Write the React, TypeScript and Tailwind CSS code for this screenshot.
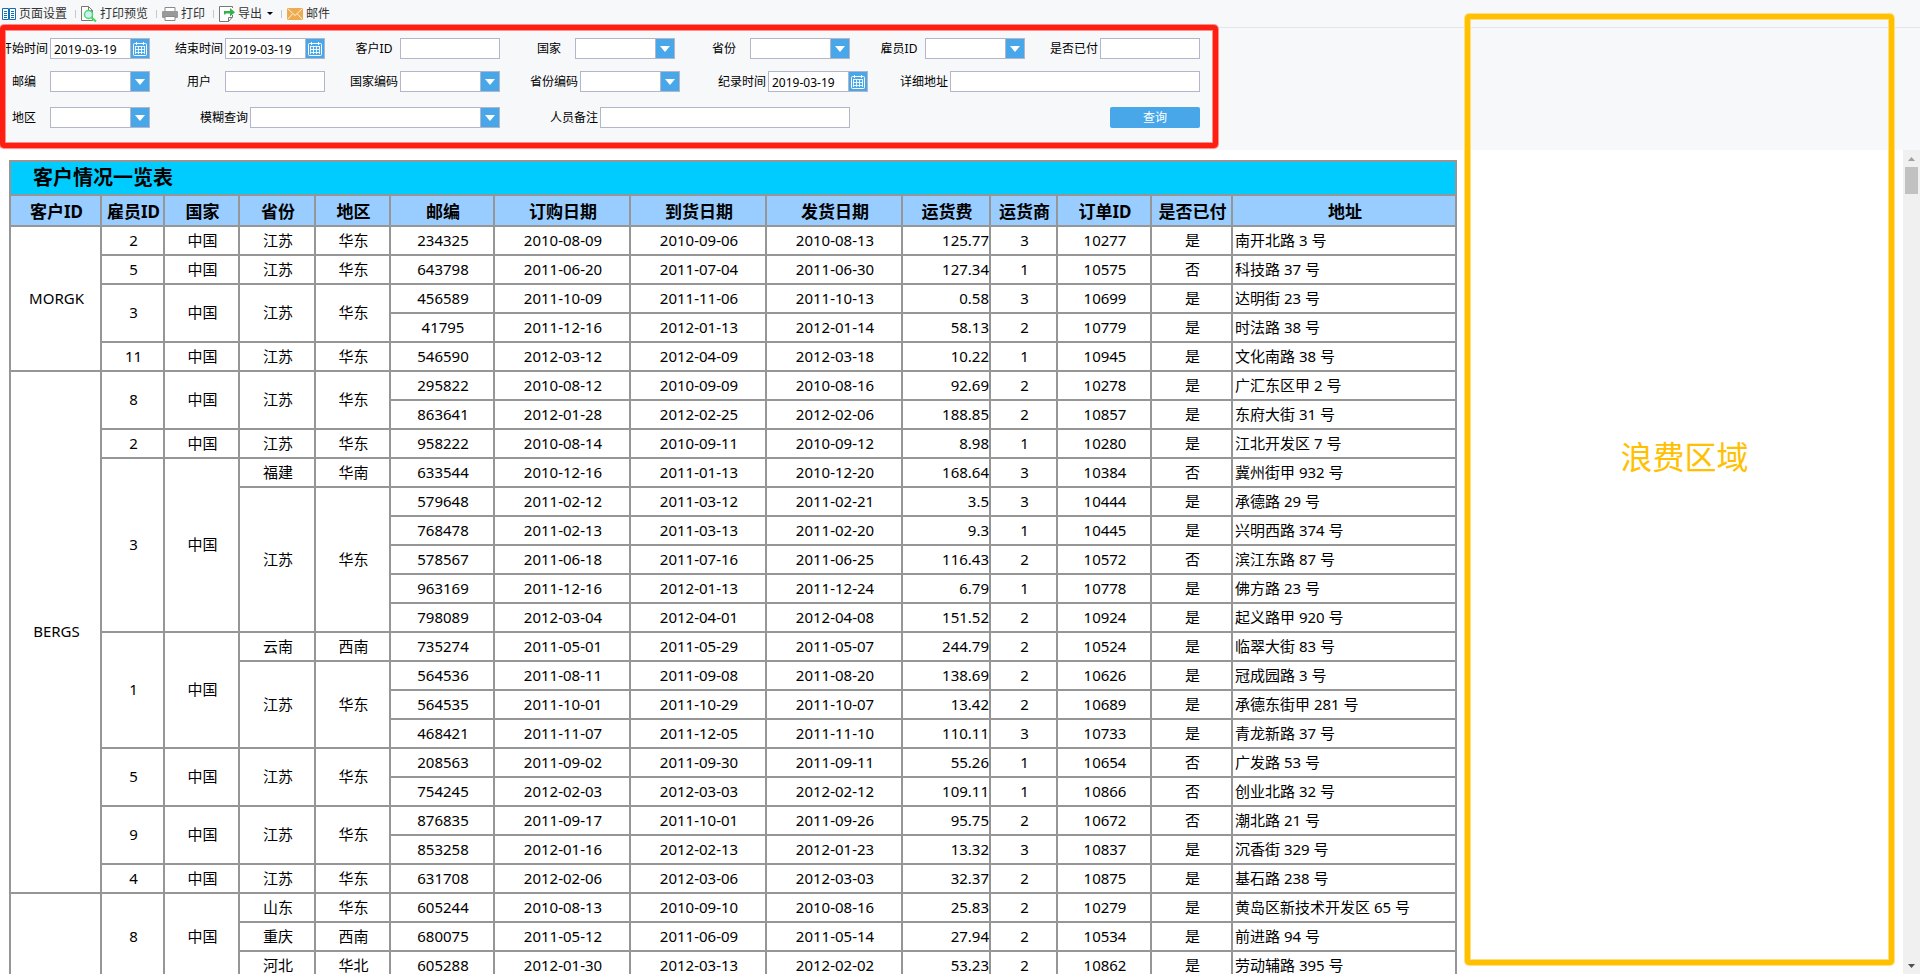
import { useId } from 'react';

type Row = {
    customer?: [string, number];
    employee?: [string, number];
    province?: [string, number];
    region?: [string, number];
    zip: string;
    dates: [string, string, string];
    fee: string;
    shipper: string;
    order: string;
    paid: string;
    address: string;
};

const columns = [
    { title: '客户ID', width: 'w-[91px]' },
    { title: '雇员ID', width: 'w-[63px]' },
    { title: '国家', width: 'w-[75px]' },
    { title: '省份', width: 'w-[76px]' },
    { title: '地区', width: 'w-[75px]' },
    { title: '邮编', width: 'w-[104px]' },
    { title: '订购日期', width: 'w-[136px]' },
    { title: '到货日期', width: 'w-[136px]' },
    { title: '发货日期', width: 'w-[136px]' },
    { title: '运货费', width: 'w-[88px]' },
    { title: '运货商', width: 'w-[67px]' },
    { title: '订单ID', width: 'w-[94px]' },
    { title: '是否已付', width: 'w-[81px]' },
    { title: '地址', width: 'w-[224px]' },
];

// [value, rowSpan] is only given on the first row of a merged cell
const rows: Row[] = [
    { customer: ['MORGK', 5], employee: ['2', 1], province: ['江苏', 1], region: ['华东', 1], zip: '234325', dates: ['2010-08-09', '2010-09-06', '2010-08-13'], fee: '125.77', shipper: '3', order: '10277', paid: '是', address: '南开北路 3 号' },
    { employee: ['5', 1], province: ['江苏', 1], region: ['华东', 1], zip: '643798', dates: ['2011-06-20', '2011-07-04', '2011-06-30'], fee: '127.34', shipper: '1', order: '10575', paid: '否', address: '科技路 37 号' },
    { employee: ['3', 2], province: ['江苏', 2], region: ['华东', 2], zip: '456589', dates: ['2011-10-09', '2011-11-06', '2011-10-13'], fee: '0.58', shipper: '3', order: '10699', paid: '是', address: '达明街 23 号' },
    { zip: '41795', dates: ['2011-12-16', '2012-01-13', '2012-01-14'], fee: '58.13', shipper: '2', order: '10779', paid: '是', address: '时法路 38 号' },
    { employee: ['11', 1], province: ['江苏', 1], region: ['华东', 1], zip: '546590', dates: ['2012-03-12', '2012-04-09', '2012-03-18'], fee: '10.22', shipper: '1', order: '10945', paid: '是', address: '文化南路 38 号' },
    { customer: ['BERGS', 18], employee: ['8', 2], province: ['江苏', 2], region: ['华东', 2], zip: '295822', dates: ['2010-08-12', '2010-09-09', '2010-08-16'], fee: '92.69', shipper: '2', order: '10278', paid: '是', address: '广汇东区甲 2 号' },
    { zip: '863641', dates: ['2012-01-28', '2012-02-25', '2012-02-06'], fee: '188.85', shipper: '2', order: '10857', paid: '是', address: '东府大街 31 号' },
    { employee: ['2', 1], province: ['江苏', 1], region: ['华东', 1], zip: '958222', dates: ['2010-08-14', '2010-09-11', '2010-09-12'], fee: '8.98', shipper: '1', order: '10280', paid: '是', address: '江北开发区 7 号' },
    { employee: ['3', 6], province: ['福建', 1], region: ['华南', 1], zip: '633544', dates: ['2010-12-16', '2011-01-13', '2010-12-20'], fee: '168.64', shipper: '3', order: '10384', paid: '否', address: '冀州街甲 932 号' },
    { province: ['江苏', 5], region: ['华东', 5], zip: '579648', dates: ['2011-02-12', '2011-03-12', '2011-02-21'], fee: '3.5', shipper: '3', order: '10444', paid: '是', address: '承德路 29 号' },
    { zip: '768478', dates: ['2011-02-13', '2011-03-13', '2011-02-20'], fee: '9.3', shipper: '1', order: '10445', paid: '是', address: '兴明西路 374 号' },
    { zip: '578567', dates: ['2011-06-18', '2011-07-16', '2011-06-25'], fee: '116.43', shipper: '2', order: '10572', paid: '否', address: '滨江东路 87 号' },
    { zip: '963169', dates: ['2011-12-16', '2012-01-13', '2011-12-24'], fee: '6.79', shipper: '1', order: '10778', paid: '是', address: '佛方路 23 号' },
    { zip: '798089', dates: ['2012-03-04', '2012-04-01', '2012-04-08'], fee: '151.52', shipper: '2', order: '10924', paid: '是', address: '起义路甲 920 号' },
    { employee: ['1', 4], province: ['云南', 1], region: ['西南', 1], zip: '735274', dates: ['2011-05-01', '2011-05-29', '2011-05-07'], fee: '244.79', shipper: '2', order: '10524', paid: '是', address: '临翠大街 83 号' },
    { province: ['江苏', 3], region: ['华东', 3], zip: '564536', dates: ['2011-08-11', '2011-09-08', '2011-08-20'], fee: '138.69', shipper: '2', order: '10626', paid: '是', address: '冠成园路 3 号' },
    { zip: '564535', dates: ['2011-10-01', '2011-10-29', '2011-10-07'], fee: '13.42', shipper: '2', order: '10689', paid: '是', address: '承德东街甲 281 号' },
    { zip: '468421', dates: ['2011-11-07', '2011-12-05', '2011-11-10'], fee: '110.11', shipper: '3', order: '10733', paid: '是', address: '青龙新路 37 号' },
    { employee: ['5', 2], province: ['江苏', 2], region: ['华东', 2], zip: '208563', dates: ['2011-09-02', '2011-09-30', '2011-09-11'], fee: '55.26', shipper: '1', order: '10654', paid: '否', address: '广发路 53 号' },
    { zip: '754245', dates: ['2012-02-03', '2012-03-03', '2012-02-12'], fee: '109.11', shipper: '1', order: '10866', paid: '否', address: '创业北路 32 号' },
    { employee: ['9', 2], province: ['江苏', 2], region: ['华东', 2], zip: '876835', dates: ['2011-09-17', '2011-10-01', '2011-09-26'], fee: '95.75', shipper: '2', order: '10672', paid: '否', address: '潮北路 21 号' },
    { zip: '853258', dates: ['2012-01-16', '2012-02-13', '2012-01-23'], fee: '13.32', shipper: '3', order: '10837', paid: '是', address: '沉香街 329 号' },
    { employee: ['4', 1], province: ['江苏', 1], region: ['华东', 1], zip: '631708', dates: ['2012-02-06', '2012-03-06', '2012-03-03'], fee: '32.37', shipper: '2', order: '10875', paid: '是', address: '基石路 238 号' },
    { customer: ['', 3], employee: ['8', 3], province: ['山东', 1], region: ['华东', 1], zip: '605244', dates: ['2010-08-13', '2010-09-10', '2010-08-16'], fee: '25.83', shipper: '2', order: '10279', paid: '是', address: '黄岛区新技术开发区 65 号' },
    { province: ['重庆', 1], region: ['西南', 1], zip: '680075', dates: ['2011-05-12', '2011-06-09', '2011-05-14'], fee: '27.94', shipper: '2', order: '10534', paid: '是', address: '前进路 94 号' },
    { province: ['河北', 1], region: ['华北', 1], zip: '605288', dates: ['2012-01-30', '2012-03-13', '2012-02-02'], fee: '53.23', shipper: '2', order: '10862', paid: '是', address: '劳动辅路 395 号' },
];

function PageSetupIcon() {
    return (
        <svg width="14" height="12" viewBox="0 0 14 12" fill="none" stroke="#0f6cb6">
            <path d="M.5 .5h6v11h-6zM7.5 .5h6v11h-6z" fill="#fff" />
            <path d="M2 3.5h3M2 5.5h3M2 7.5h3M2 9.5h3M9 3.5h3M9 5.5h3M9 7.5h3M9 9.5h3" />
        </svg>
    );
}

function PreviewIcon() {
    return (
        <svg width="16" height="16" viewBox="0 0 16 16" fill="none">
            <path d="M.5 .5h7l4 4v10H.5z" fill="#fff" stroke="#777" />
            <path d="M7.5 .5v4h4" stroke="#777" />
            <circle cx="7.5" cy="8.5" r="4" fill="#cdeff5" stroke="#4bdc6a" strokeWidth="1.5" />
            <path d="M10.5 11.5l4.500 4" stroke="#35e052" strokeWidth="2" />
        </svg>
    );
}

function PrintIcon() {
    return (
        <svg width="16" height="14" viewBox="0 0 16 14" fill="none">
            <path d="M3 5V.5h10V5" fill="#fff" stroke="#8a8a8a" />
            <rect y="4" width="16" height="7" rx="1" fill="#999" />
            <path d="M3 9.5h10v4H3z" fill="#fff" stroke="#8a8a8a" />
        </svg>
    );
}

function ExportIcon() {
    return (
        <svg width="16" height="16" viewBox="0 0 16 16" fill="none">
            <path d="M13.5 9v2l-4 4.5H.5V.5h13V2" fill="#fff" stroke="#777" />
            <path d="M9.5 15.5v-4h4" stroke="#777" />
            <path d="M5 8.500V5h6V2l5 4.200-5 4.200V7.500H6.500v1z" fill="#35b04a" />
        </svg>
    );
}

function MailIcon() {
    return (
        <svg width="16" height="12" viewBox="0 0 16 12">
            <rect width="16" height="12" fill="#eeac50" />
            <path d="M.5 .5L8 7.5 15.5 .5M.5 11.5L5.5 6M15.5 11.5L10.5 6" fill="none" stroke="#fff1d8" />
        </svg>
    );
}

function CalendarIcon() {
    return (
        <svg width="14" height="14" viewBox="0 0 14 14" fill="none" stroke="#fff">
            <rect x=".5" y="1.5" width="13" height="12" rx="1" />
            <path d="M3.500 0v3M10.500 0v3" />
            <path d="M2 4.500h10M2 7.500h10M2 10.500h10M2.500 4v8M5.500 4v8M8.500 4v8M11.500 4v8" strokeOpacity=".85" />
        </svg>
    );
}

function Separator() {
    return <span className="ml-[3px] h-2 w-px bg-[#c4c6ca]" />;
}

function ToolButton({ icon, label, caret }: { icon: React.ReactNode; label: string; caret?: boolean }) {
    return (
        <button type="button" className="flex items-center gap-[3px] text-[#333]">
            {icon}
            {label}
            {caret && (
                <svg width="6" height="3" viewBox="0 0 6 3" className="ml-0.5">
                    <path d="M0 0h6L3 3z" fill="#000" />
                </svg>
            )}
        </button>
    );
}

function Field({ label, type = 'text', wide, className = '' }: { label: string; type?: 'text' | 'date' | 'select'; wide?: boolean; className?: string }) {
    const id = useId();
    const box = 'h-[21px] border border-[#b3b5cb] bg-white';
    const width = wide ? 'w-[250px]' : 'w-[100px]';

    return (
        <div className={`flex items-center ${className}`}>
            <label htmlFor={id} className="w-[50px] pr-0.5 text-center whitespace-nowrap">{label}</label>
            {type === 'text' && <input id={id} type="text" className={`${box} ${width} px-[3px] outline-none`} />}
            {type === 'date' && (
                <div className={`${box} ${width} flex`}>
                    <input id={id} type="text" defaultValue="2019-03-19" className="min-w-0 flex-1 px-[3px] pt-0.5 outline-none" />
                    <button type="button" aria-label={label} className="flex w-[19px] items-center justify-center border-l border-[#b3b5cb] bg-[#47a7e9]">
                        <CalendarIcon />
                    </button>
                </div>
            )}
            {type === 'select' && (
                <div className={`${box} ${width} relative`}>
                    <select id={id} className="h-full w-full appearance-none px-[3px] outline-none">
                        <option></option>
                    </select>
                    <span className="pointer-events-none absolute inset-y-0 right-0 flex w-[19px] items-center justify-center border-l border-[#b3b5cb] bg-[#47a7e9]">
                        <svg width="10" height="6" viewBox="0 0 10 6"><path d="M0 0h10L5 6z" fill="#fff" /></svg>
                    </span>
                </div>
            )}
        </div>
    );
}

function Cell({ value, span = 1, align = 'pl-0.5 text-center' }: { value: string; span?: number; align?: string }) {
    return <td rowSpan={span} className={`h-[29px] border-2 border-[#969696] pb-0.5 ${align}`}>{value}</td>;
}

function ReportTable() {
    return (
        <table className="w-[1448px] table-fixed border-collapse border-2 border-[#969696] text-[15px] leading-5">
            <colgroup>
                {columns.map((c) => <col key={c.title} className={c.width} />)}
            </colgroup>
            <thead>
                <tr className="h-[34px] bg-[#00ccff]">
                    <th colSpan={14} className="border-2 border-[#969696] pl-[22px] text-left text-xl leading-6 font-bold">客户情况一览表</th>
                </tr>
                <tr className="h-[31px] bg-[#99ccff]">
                    {columns.map((c) => (
                        <th key={c.title} className="border-2 border-[#969696] pt-0.5 pl-0.5 text-[17px] font-bold whitespace-nowrap">{c.title}</th>
                    ))}
                </tr>
            </thead>
            <tbody>
                {rows.map((r) => (
                    <tr key={r.order}>
                        {r.customer && <Cell value={r.customer[0]} span={r.customer[1]} />}
                        {r.employee && <Cell value={r.employee[0]} span={r.employee[1]} />}
                        {r.employee && <Cell value="中国" span={r.employee[1]} />}
                        {r.province && <Cell value={r.province[0]} span={r.province[1]} />}
                        {r.region && <Cell value={r.region[0]} span={r.region[1]} />}
                        <Cell value={r.zip} />
                        {r.dates.map((d, i) => <Cell key={i} value={d} />)}
                        <Cell value={r.fee} align="text-right" />
                        <Cell value={r.shipper} />
                        <Cell value={r.order} />
                        <Cell value={r.paid} />
                        <Cell value={r.address} align="pl-0.5 text-left whitespace-nowrap" />
                    </tr>
                ))}
            </tbody>
        </table>
    );
}

export default function App() {
    return (
        <div className="relative flex h-screen flex-col overflow-hidden bg-white font-['Noto_Sans','Noto_Sans_CJK_SC',sans-serif] text-xs text-black">
            {/* Toolbar */}
            <div className="flex h-7 shrink-0 items-center gap-[5px] border-b border-[#e4e6e9] bg-[#f7f8fa] pl-0.5">
                <ToolButton icon={<PageSetupIcon />} label="页面设置" />
                <Separator />
                <ToolButton icon={<PreviewIcon />} label="打印预览" />
                <Separator />
                <ToolButton icon={<PrintIcon />} label="打印" />
                <Separator />
                <ToolButton icon={<ExportIcon />} label="导出" caret />
                <Separator />
                <ToolButton icon={<MailIcon />} label="邮件" />
            </div>

            {/* Query form */}
            <form className="h-[122px] shrink-0 bg-[#f7f8fa] pt-2.5" onSubmit={(e) => e.preventDefault()}>
                <div className="w-[1200px]">
                    <div className="flex gap-[25px]">
                        <Field label="开始时间" type="date" />
                        <Field label="结束时间" type="date" />
                        <Field label="客户ID" />
                        <Field label="国家" type="select" />
                        <Field label="省份" type="select" />
                        <Field label="雇员ID" type="select" />
                        <Field label="是否已付" />
                    </div>
                    <div className="mt-3 flex">
                        <Field label="邮编" type="select" />
                        <Field label="用户" className="ml-[25px]" />
                        <Field label="国家编码" type="select" className="ml-[25px]" />
                        <Field label="省份编码" type="select" className="ml-[30px]" />
                        <Field label="纪录时间" type="date" className="ml-[38px]" />
                        <Field label="详细地址" wide className="ml-8" />
                    </div>
                    <div className="mt-[15px] flex gap-[50px]">
                        <Field label="地区" type="select" />
                        <Field label="模糊查询" type="select" wide />
                        <Field label="人员备注" wide />
                        <button type="submit" className="ml-auto h-[21px] w-[90px] rounded-xs bg-[#47a7e9] text-white">查询</button>
                    </div>
                </div>
            </form>

            {/* Report */}
            <div className="flex min-h-0 flex-1">
                <div className="min-w-0 flex-1 overflow-hidden pt-2.5 pl-[9px]">
                    <ReportTable />
                </div>
                <div className="flex w-[17px] flex-col items-center bg-[#f0f0f0]">
                    <svg width="17" height="17" viewBox="0 0 17 17"><path d="M5 11h7L8.500 7z" fill="#a0a0a0" /></svg>
                    <div className="h-[27px] w-[13px] bg-[#c1c1c1]" />
                    <svg width="17" height="17" viewBox="0 0 17 17" className="mt-auto"><path d="M5 7h7l-3.500 4z" fill="#505050" /></svg>
                </div>
            </div>

            {/* Annotations */}
            <div className="pointer-events-none absolute top-[25px] left-0 h-[123px] w-[1218px] rounded-sm border-5 border-[#ff1f12] shadow-[0_0_0_1px_#ff8f88,inset_0_0_0_1px_#ff8f88]" />
            <div className="pointer-events-none absolute top-3.5 right-[26px] bottom-[9px] left-[1465px] rounded-sm border-5 border-[#ffc000] pt-[414px] pl-[10px] text-center text-[32px] leading-[48px] text-[#ffc000] shadow-[0_0_0_1px_#ffdf80,inset_0_0_0_1px_#ffdf80]">
                浪费区域
            </div>
        </div>
    );
}
